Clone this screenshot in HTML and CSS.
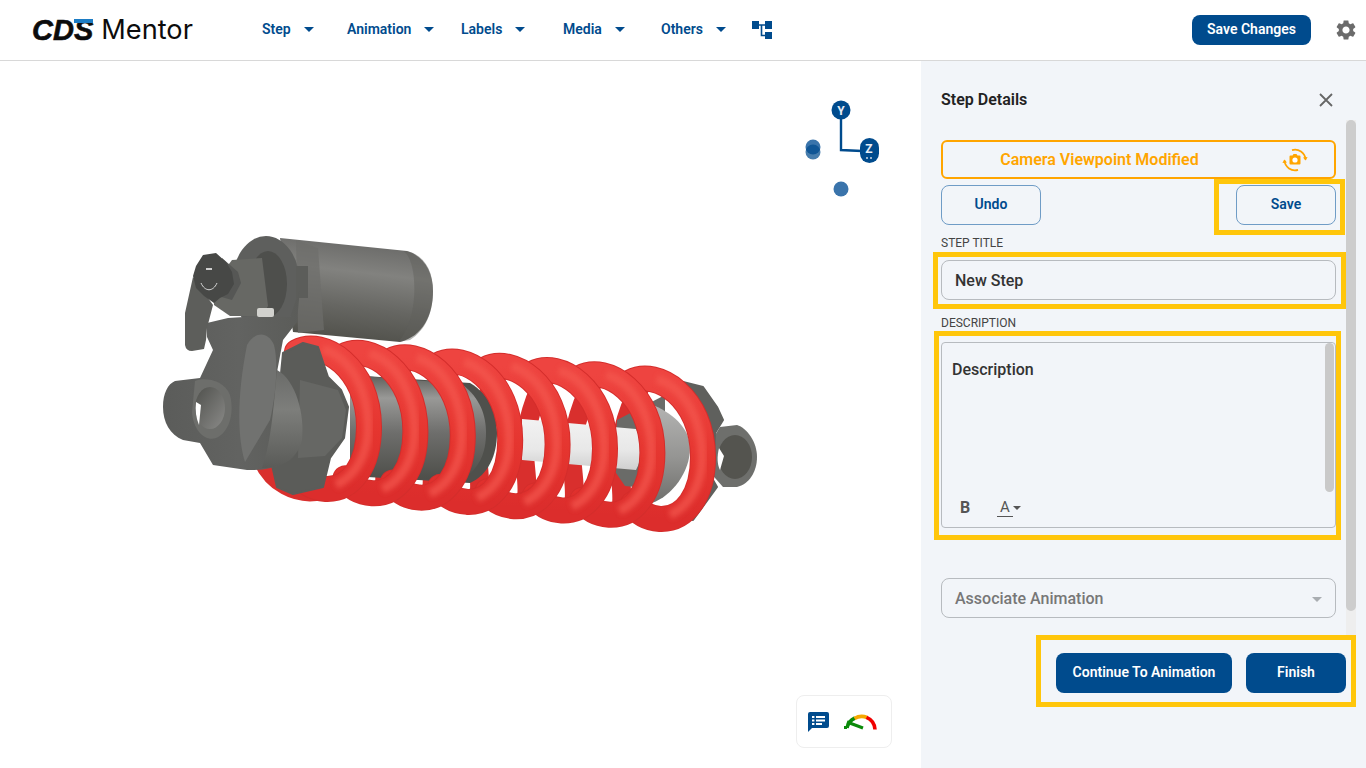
FILE: index.html
```html
<!DOCTYPE html>
<html lang="en">
<head>
  <meta charset="UTF-8">
  <meta name="viewport" content="width=device-width, initial-scale=1.0">
  <title>CDS Mentor</title>
  <link rel="stylesheet" href="styles.css">
</head>
<body>
  <header class="topbar">
    <div class="logo">
      <span class="logo-cds">CDS<i class="logo-tick"></i></span>
      <span class="logo-name">Mentor</span>
    </div>
    <nav class="nav">
      <a class="nav-item">Step<i class="caret"></i></a>
      <a class="nav-item">Animation<i class="caret"></i></a>
      <a class="nav-item">Labels<i class="caret"></i></a>
      <a class="nav-item">Media<i class="caret"></i></a>
      <a class="nav-item">Others<i class="caret"></i></a>
      <svg class="tree-icon" width="20" height="18" viewBox="0 0 20 18">
        <path d="M0 0h7v8H0zM13 0h7v8h-7zM13 11h7v7h-7z" fill="#004b8d"/>
        <path d="M7 4h6M9.5 4v10.5H13" stroke="#004b8d" stroke-width="1.6" fill="none"/>
      </svg>
    </nav>
    <button class="btn-solid btn-save-changes">Save Changes</button>
    <svg class="gear" width="24" height="24" viewBox="0 0 24 24">
      <path fill="#6b6b6b" d="M19.14 12.94c.04-.3.06-.61.06-.94 0-.32-.02-.64-.07-.94l2.03-1.58c.18-.14.23-.41.12-.61l-1.92-3.32c-.12-.22-.37-.29-.59-.22l-2.39.96c-.5-.38-1.03-.7-1.62-.94l-.36-2.54c-.04-.24-.24-.41-.48-.41h-3.84c-.24 0-.43.17-.47.41l-.36 2.54c-.59.24-1.13.57-1.62.94l-2.39-.96c-.22-.08-.47 0-.59.22L2.74 8.87c-.12.21-.08.47.12.61l2.03 1.58c-.05.3-.09.63-.09.94s.02.64.07.94l-2.03 1.58c-.18.14-.23.41-.12.61l1.92 3.32c.12.22.37.29.59.22l2.39-.96c.5.38 1.03.7 1.62.94l.36 2.54c.05.24.24.41.48.41h3.84c.24 0 .44-.17.47-.41l.36-2.54c.59-.24 1.13-.56 1.62-.94l2.39.96c.22.08.47 0 .59-.22l1.92-3.32c.12-.22.07-.47-.12-.61l-2.01-1.58zM12 15.6c-1.98 0-3.6-1.62-3.6-3.6s1.62-3.6 3.6-3.6 3.6 1.62 3.6 3.6-1.62 3.6-3.6 3.6z"/>
    </svg>
  </header>

  <div class="workspace">
    <main class="viewer">
      <!-- viewBox uses page coordinates so the model is easy to line up -->
      <svg class="scene" width="921" height="707" viewBox="0 61 921 707">
        <defs>
          <linearGradient id="reservoir" gradientUnits="userSpaceOnUse" x1="350" y1="240" x2="338" y2="342">
            <stop offset="0" stop-color="#6a6a68"/>
            <stop offset=".3" stop-color="#82827f"/>
            <stop offset=".65" stop-color="#666662"/>
            <stop offset="1" stop-color="#4f4f49"/>
          </linearGradient>
          <linearGradient id="barrel" x1="0" y1="0" x2="0" y2="1">
            <stop offset="0" stop-color="#5d5e5a"/>
            <stop offset=".22" stop-color="#999997"/>
            <stop offset=".55" stop-color="#6e6e6c"/>
            <stop offset="1" stop-color="#4d4e49"/>
          </linearGradient>
          <linearGradient id="rod" x1="0" y1="0" x2="0" y2="1">
            <stop offset="0" stop-color="#f2f2f2"/>
            <stop offset=".6" stop-color="#e8e8e8"/>
            <stop offset="1" stop-color="#cfcfcf"/>
          </linearGradient>
          <linearGradient id="cup" x1="0" y1="0" x2="0" y2="1">
            <stop offset="0" stop-color="#b4b4b3"/>
            <stop offset=".55" stop-color="#949492"/>
            <stop offset="1" stop-color="#6f6f6c"/>
          </linearGradient>
          <linearGradient id="forge" x1="0" y1="0" x2="1" y2="0">
            <stop offset="0" stop-color="#5b5c5a"/>
            <stop offset=".55" stop-color="#626361"/>
            <stop offset="1" stop-color="#5b5c59"/>
          </linearGradient>
          <linearGradient id="housing" x1="0" y1="0" x2="0" y2="1">
            <stop offset="0" stop-color="#6a6b69"/>
            <stop offset=".4" stop-color="#7d7e7b"/>
            <stop offset="1" stop-color="#5a5b58"/>
          </linearGradient>
          <linearGradient id="hole" x1="0" y1="0" x2="1" y2="1">
            <stop offset="0" stop-color="#4f504c"/>
            <stop offset="1" stop-color="#8a8a88"/>
          </linearGradient>
          <linearGradient id="tube" x1="0" y1="0" x2="0" y2="1">
            <stop offset="0" stop-color="#ee4440"/>
            <stop offset=".6" stop-color="#e5352f"/>
            <stop offset="1" stop-color="#dc2d2c"/>
          </linearGradient>
          <filter id="soft"><feGaussianBlur stdDeviation="2.4"/></filter>
          <g id="coil-back">
            <path d="M325 491C345 495 335 455 335 436C335 410 345 375 360 355" fill="none" stroke="#d92f2d" stroke-width="19"/>
          </g>
          <g id="coil">
            <path d="M296 352C322 338 368 368 368 427C368 465 350 490 325 489C312 488 303 482 298 474" fill="none" stroke="#d42d2b" stroke-width="26" stroke-linecap="round"/>
            <path d="M296 352C322 338 368 368 368 427C368 465 350 490 325 489C312 488 303 482 298 474" fill="none" stroke="url(#tube)" stroke-width="24" stroke-linecap="round"/>
            <path d="M322 349C350 358 367 390 367 427C367 455 354 476 335 485" fill="none" stroke="#f4594f" stroke-width="9" opacity=".7" filter="url(#soft)"/>
          </g>
        </defs>

        <!-- reservoir -->
        <path d="M280 238L407 251C424 256 433 272 433 291C433 315 423 336 400 342L293 332Z" fill="url(#reservoir)"/>
        <path d="M403 251C418 258 420 320 398 342L410 340C426 330 433 312 433 291C433 270 424 255 407 251Z" fill="#5f5f5c" opacity=".45"/>
        <ellipse cx="266" cy="284" rx="34" ry="48" fill="#5e5f5d"/>
        <ellipse cx="268" cy="284" rx="19" ry="33" fill="#4e4f4c"/>
        <path d="M296 240L318 248L324 330L298 333Z" fill="#6d6d6b" opacity=".7"/>
        <path d="M296 266H308V298H296Z" fill="#5c5d5a"/>

        <!-- back half of the coils -->
        <path d="M322 491C295 497 272 482 262 460" fill="none" stroke="#d92f2d" stroke-width="18"/>
        <use href="#coil-back" transform="translate(47.4 4.3)"/>
        <use href="#coil-back" transform="translate(94.8 8.6)"/>
        <use href="#coil-back" transform="translate(142.2 12.9)"/>
        <use href="#coil-back" transform="translate(189.6 17.2)"/>
        <use href="#coil-back" transform="translate(237 21.5)"/>
        <use href="#coil-back" transform="translate(284.4 25.8)"/>

        <!-- barrel, rod, far end -->
        <path d="M350 375L470 383C490 395 497 415 497 433C497 455 488 475 470 483L350 476Z" fill="#4f504c"/>
        <path d="M350 375L462 384C480 398 486 415 486 433C486 452 480 468 462 480L350 476Z" fill="url(#barrel)"/>
        <path d="M617 420L665 395L665 490L625 486L614 470Z" fill="#6a6b68"/>
        <path d="M522 419L636 429C642 440 642 460 636 470L522 460Z" fill="url(#rod)"/>
        <path d="M650 404C672 412 690 428 690 448C690 472 672 496 652 503L640 500Z" fill="url(#cup)"/>
        <path d="M720 427L737 425C747 428 757 442 757 457C757 472 749 484 737 487L723 487L708 470L712 440Z" fill="#6e6f6c"/>
        <ellipse cx="735" cy="457" rx="17" ry="22" fill="#54544f"/>
        <path d="M719 448C717 456 717 464 720 470L724 456Z" fill="#fff"/>
        <path d="M683 382L703 387L717 407L723 420L715 433L713 480L717 487L693 520L680 516L700 450Z" fill="#5f605d" stroke="#5f605d" stroke-linejoin="round" stroke-width="2"/>

        <!-- front half of the coils, right one first -->
        <use href="#coil" transform="translate(335 30)"/>
        <use href="#coil" transform="translate(284.4 25.8)"/>
        <use href="#coil" transform="translate(237 21.5)"/>
        <use href="#coil" transform="translate(189.6 17.2)"/>
        <use href="#coil" transform="translate(142.2 12.9)"/>
        <use href="#coil" transform="translate(94.8 8.6)"/>
        <use href="#coil" transform="translate(47.4 4.3)"/>
        <use href="#coil" transform="translate(1 0)"/>

        <!-- spring flange and body -->
        <path d="M283 353L303 343L318 347L328 377L341 390L348 407L344 438L330 458L323 487L293 494L277 487L272 465Z" fill="#5b5c59" stroke="#5b5c59" stroke-linejoin="round" stroke-width="2"/>
        <path d="M300 380L338 390L346 410L342 438L325 456L298 458Z" fill="#666764"/>
        <path d="M207 323L228 318L260 316L290 317L300 288L297 322L283 340L277 372C296 382 303 420 299 445C294 462 275 471 247 470L213 465L200 443L183 440C170 435 163 422 163 407C163 393 168 384 175 381L200 378L213 350L207 337Z" fill="url(#forge)"/>
        <path d="M277 370C296 380 305 415 302 440C297 460 282 468 262 468C272 440 274 400 277 370Z" fill="url(#housing)"/>
        <path d="M247 345C255 331 268 331 274 345C278 360 277 390 270 420L245 462C238 440 236 400 247 345Z" fill="#717270"/>
        <path d="M195 381C203 377 224 379 230 395C235 415 228 433 216 438C205 442 193 430 192 412Z" fill="#6d6e6b"/>
        <ellipse cx="210" cy="408" rx="15" ry="21" fill="url(#hole)"/>
        <path d="M196 402C195 410 196 418 199 425L201 405Z" fill="#fff"/>

        <!-- clevis, knob, lever -->
        <path d="M232 260L262 258L268 306L262 316L230 316L214 305L213 285Z" fill="#676864"/>
        <rect x="257" y="308" width="17" height="9" rx="2" fill="#d2d2ce"/>
        <path d="M193 277L185 313L185 345Q186 351 192 351L204 349L206 340L207 328L213 305Z" fill="#5d5e5b"/>
        <path d="M222 258L238 272L241 283L232 300L218 296Z" fill="#565755"/>
        <path d="M203 255L216 253L226 262L232 272L234 284L228 294L220 298L214 303L204 296L196 288L193 276L196 266Z" fill="#474846"/>
        <path d="M201 283C205 292 213 292 217 283" fill="none" stroke="#d8d8d8" stroke-width="1"/>
        <rect x="206" y="268" width="6" height="2" fill="#cfcfcf"/>

        <!-- orientation gizmo -->
        <circle cx="813" cy="147" r="7.5" fill="#3a74ab"/>
        <circle cx="813" cy="152" r="7.5" fill="#004b8d" opacity=".72"/>
        <circle cx="841" cy="189" r="7.500" fill="#3a74ab"/>
        <path d="M841 115V150L862 151" fill="none" stroke="#004b8d" stroke-width="2.4"/>
        <circle cx="841" cy="110" r="9.5" fill="#004b8d"/>
        <rect x="860" y="138" width="19" height="25" rx="9.5" fill="#004b8d"/>
        <text class="axis" x="841" y="114.5">Y</text>
        <text class="axis" x="869" y="153">Z</text>
        <path d="M866 158h2M870 158h2" stroke="#c9d6e3" stroke-width="1.4"/>
      </svg>

      <div class="tools">
        <svg width="21" height="20" viewBox="0 0 21 20">
          <path d="M2 0H19A2 2 0 0 1 21 2V14A2 2 0 0 1 19 16H4L0 20V2A2 2 0 0 1 2 0Z" fill="#004b8d"/>
          <path d="M4 4h2.4v2H4zM8 4h9v2H8zM4 7.5h2.4v2H4zM8 7.5h9v2H8zM4 11h2.4v2H4zM8 11h6v2H8z" fill="#fff"/>
        </svg>
        <svg width="33" height="18" viewBox="0 0 33 18">
          <path d="M3 15A14 14 0 0 1 11 5" fill="none" stroke="#0a8a0a" stroke-width="3.6"/>
          <path d="M10.500 5.500A14 14 0 0 1 23 4.500" fill="none" stroke="#f5a800" stroke-width="3.6"/>
          <path d="M22.500 4.300A14 14 0 0 1 31 16.500" fill="none" stroke="#f00000" stroke-width="3.600"/>
          <path d="M3 9L19 15" stroke="#0a8a0a" stroke-width="3"/>
          <path d="M0 13h3v3H0z" fill="#0a8a0a"/>
        </svg>
      </div>
    </main>

    <aside class="panel">
      <div class="panel-head">
        <h2 class="panel-title">Step Details</h2>
        <svg width="16" height="16" viewBox="0 0 16 16">
          <path d="M2 2L14 14M14 2L2 14" stroke="#666" stroke-width="1.8"/>
        </svg>
      </div>

      <div class="viewpoint">
        <span>Camera Viewpoint Modified</span>
        <svg class="viewpoint-icon" width="26" height="26" viewBox="0 0 26 26">
          <path d="M8.500 8.500h2l1-1.500h3l1 1.500h2a1 1 0 0 1 1 1v7a1 1 0 0 1-1 1h-9a1 1 0 0 1-1-1v-7a1 1 0 0 1 1-1z" fill="#ffa500"/>
          <circle cx="13" cy="13" r="2.600" fill="#fff"/>
          <path d="M10 3.200A10.500 10.500 0 0 1 23.500 12.500M16 22.800A10.500 10.500 0 0 1 2.500 13.500" fill="none" stroke="#ffa500" stroke-width="1.800"/>
          <path d="M21 10.500l2.600 3 2-3.400zM5 15.500l-2.600-3-2 3.400z" fill="#ffa500"/>
        </svg>
      </div>

      <div class="actions">
        <button class="btn-line">Undo</button>
        <div class="marked">
          <button class="btn-line">Save</button>
          <div class="mark mark-save"></div>
        </div>
      </div>

      <label class="field-label field-label-title">Step Title</label>
      <div class="marked">
        <div class="input">New Step</div>
        <div class="mark mark-title"></div>
      </div>

      <label class="field-label field-label-desc">Description</label>
      <div class="marked">
        <div class="editor">
          <div class="editor-text">Description</div>
          <div class="editor-tools">
            <span class="tool-bold">B</span>
            <span class="tool-color">A</span>
            <i class="caret caret-small"></i>
          </div>
          <div class="editor-scroll"></div>
        </div>
        <div class="mark mark-desc"></div>
      </div>

      <div class="select">
        <span>Associate Animation</span>
        <i class="caret caret-grey"></i>
      </div>

      <div class="footer marked">
        <button class="btn-solid btn-continue">Continue To Animation</button>
        <button class="btn-solid btn-finish">Finish</button>
        <div class="mark mark-footer"></div>
      </div>

      <div class="scroll-track"><div class="scroll-thumb"></div></div>
    </aside>
  </div>
</body>
</html>
```

FILE: styles.css
```css
* {
  box-sizing: border-box;
  margin: 0;
  padding: 0;
  font-family: 'Roboto', 'Noto Sans', sans-serif;
}
body {
  width: 1366px;
  height: 768px;
  overflow: hidden;
  background: #fff;
  display: flex;
  flex-direction: column;
}
button {
  cursor: pointer;
  font-size: 14px;
  font-weight: 600;
  padding-bottom: 2px;
}

/* top bar */
.topbar {
  height: 61px;
  flex: none;
  display: flex;
  align-items: center;
  padding: 0 8px 1px 32px;
  border-bottom: 1px solid #d8d8d8;
}
.logo {
  width: 230px;
  display: flex;
  align-items: center;
  gap: 8px;
}
.logo-cds {
  position: relative;
  font-family: 'Liberation Sans', sans-serif;
  font-size: 29px;
  line-height: 30px;
  font-weight: 700;
  font-style: italic;
  color: #0c0c0c;
  -webkit-text-stroke: .6px #0c0c0c;
}
.logo-tick {
  position: absolute;
  right: 0;
  top: 4px;
  width: 19px;
  height: 4px;
  background: #1c7cc4;
}
.logo-name {
  font-family: 'Inter', sans-serif;
  font-size: 27.2px;
  line-height: 30px;
  color: #0c0c0c;
}
.nav {
  flex: 1;
  display: grid;
  grid-template-columns: 85px 114px 102px 98px 91px auto;
  align-items: center;
}
.nav-item {
  display: flex;
  align-items: center;
  gap: 13px;
  padding-bottom: 2px;
  color: #004b8d;
  font-size: 14px;
  font-weight: 600;
}
.caret {
  width: 0;
  height: 0;
  border-left: 5px solid transparent;
  border-right: 5px solid transparent;
  border-top: 5px solid #004b8d;
  margin-top: 2px;
}
.caret-small {
  border-left-width: 4px;
  border-right-width: 4px;
  border-top: 4px solid #555;
  margin: 0;
}
.caret-grey {
  border-top-color: #a9adb1;
}
.btn-solid {
  height: 40px;
  border: none;
  border-radius: 8px;
  background: #004b8d;
  color: #fff;
}
.btn-save-changes {
  width: 119px;
  height: 30px;
}
.gear {
  margin-left: 23px;
}

/* viewer */
.workspace {
  flex: 1;
  display: flex;
  min-height: 0;
}
.viewer {
  position: relative;
  width: 921px;
  flex: none;
}
.scene {
  display: block;
}
.axis {
  font-size: 12px;
  font-weight: 700;
  fill: #e8eef5;
  text-anchor: middle;
}
.tools {
  position: absolute;
  left: 796px;
  top: 634px;
  width: 96px;
  height: 53px;
  display: flex;
  align-items: center;
  gap: 15px;
  padding-left: 11px;
  background: #fff;
  border: 1px solid #eee;
  border-radius: 8px;
}

/* step details */
.panel {
  position: relative;
  flex: 1;
  background: #f2f5f9;
  padding: 29px 30px 0 20px;
}
.panel-head {
  display: flex;
  align-items: center;
  justify-content: space-between;
  height: 20px;
  padding-right: 2px;
}
.panel-title {
  font-size: 16px;
  line-height: 20px;
  font-weight: 600;
  color: #222;
}
.viewpoint {
  position: relative;
  height: 39px;
  margin-top: 30px;
  padding-right: 78px;
  border: 2px solid #ffa500;
  border-radius: 6px;
  display: flex;
  align-items: center;
  justify-content: center;
  color: #ffa500;
  font-size: 16px;
  font-weight: 600;
}
.viewpoint-icon {
  position: absolute;
  right: 26px;
  top: 5px;
}
.actions {
  display: flex;
  justify-content: space-between;
  margin-top: 6px;
}
.btn-line {
  display: block;
  width: 100px;
  height: 40px;
  background: #f2f5f9;
  border: 1px solid #6f9cc6;
  border-radius: 8px;
  color: #004b8d;
}
.field-label {
  display: block;
  height: 16px;
  font-size: 12px;
  line-height: 16px;
  color: #444;
  text-transform: uppercase;
}
.field-label-title {
  margin-top: 10px;
  margin-bottom: 9px;
}
.field-label-desc {
  margin-top: 15px;
  margin-bottom: 11px;
}
.marked {
  position: relative;
}
.input,
.select {
  height: 40px;
  border: 1px solid #b7bbbf;
  border-radius: 8px;
  padding: 0 13px;
  display: flex;
  align-items: center;
  justify-content: space-between;
  font-size: 16px;
  font-weight: 500;
  color: #333;
}
.editor {
  position: relative;
  height: 186px;
  border: 1px solid #b7bbbf;
  border-radius: 4px;
  padding: 16px 10px 0;
  font-size: 16px;
  font-weight: 500;
  color: #333;
}
.editor-text {
  line-height: 22px;
}
.editor-tools {
  position: absolute;
  left: 18px;
  bottom: 10px;
  display: flex;
  align-items: center;
  color: #555;
}
.tool-bold {
  width: 37px;
  font-size: 16px;
  font-weight: 700;
}
.tool-color {
  width: 16px;
  font-size: 15px;
  line-height: 17px;
  border-bottom: 1px solid #555;
  text-align: center;
  font-weight: 400;
}
.editor-scroll {
  position: absolute;
  right: 1px;
  top: 0;
  width: 9px;
  height: 149px;
  background: #c9c9c9;
  border-radius: 5px;
}
.select {
  margin-top: 50px;
  color: #777;
}
.footer {
  display: flex;
  justify-content: flex-end;
  gap: 14px;
  margin-top: 35px;
  margin-right: -10px;
}
.btn-continue {
  width: 176px;
}
.btn-finish {
  width: 100px;
}
.scroll-track {
  position: absolute;
  left: 425px;
  top: 59px;
  width: 10px;
  height: 515px;
  background: #eeeeee;
}
.scroll-thumb {
  height: 491px;
  background: #cdcdcd;
  border-radius: 5px;
}

/* yellow callouts drawn over the fields */
.mark {
  position: absolute;
  border: 5px solid #ffc60b;
  pointer-events: none;
}
.mark-save {
  inset: -6px -9px -10px -22px;
}
.mark-title {
  inset: -8px -10px -9px -8px;
}
.mark-desc {
  inset: -11px -5px -12px -7px;
}
.mark-footer {
  top: -18px;
  bottom: -14px;
  right: -10px;
  width: 320px;
}
```
